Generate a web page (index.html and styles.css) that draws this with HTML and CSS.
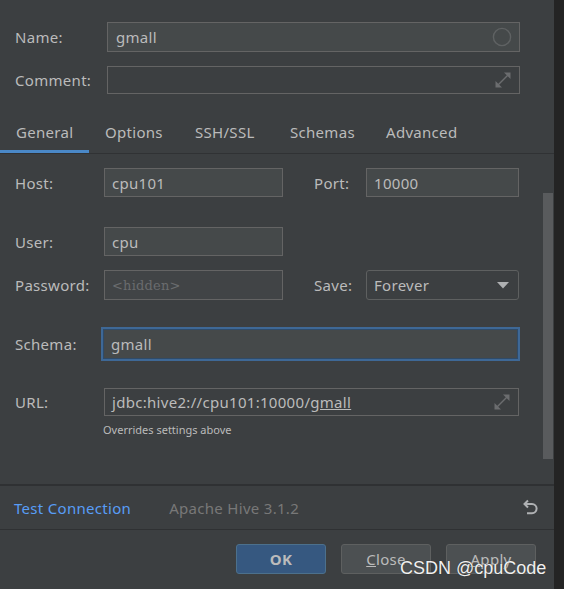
FILE: index.html
```html
<!DOCTYPE html>
<html>
<head>
<meta charset="utf-8">
<link rel="stylesheet" href="styles.css">
</head>
<body>
<div class="window">
  <div class="dialog">
    <div class="head">
      <div class="row row-name">
        <span class="label">Name:</span>
        <div class="field filled head-field">
          <span class="value">gmall</span>
          <svg class="icon-circle" width="20" height="20" viewBox="0 0 20 20"><circle cx="10" cy="10" r="8.6" fill="none" stroke="#5f6263" stroke-width="1.4"/></svg>
        </div>
      </div>
      <div class="row row-comment">
        <span class="label">Comment:</span>
        <div class="field plain head-field">
          <span class="value"></span>
          <svg class="icon-expand" width="18" height="18" viewBox="0 0 18 18"><path d="M3.5 14.5 L14.5 3.5" stroke="#6b6d6f" stroke-width="1.5"/><path d="M10 1.5 H16.5 V8 Z" fill="#6b6d6f"/><path d="M1.5 10 V16.5 H8 Z" fill="#6b6d6f"/></svg>
        </div>
      </div>
    </div>

    <nav class="tabs">
      <span class="tab t1 active">General</span>
      <span class="tab t2">Options</span>
      <span class="tab t3">SSH/SSL</span>
      <span class="tab t4">Schemas</span>
      <span class="tab t5">Advanced</span>
    </nav>

    <div class="body">
      <div class="form">
        <div class="frow r-host">
          <span class="label">Host:</span>
          <div class="field filled short"><span class="value">cpu101</span></div>
          <span class="label side">Port:</span>
          <div class="field filled side-field"><span class="value">10000</span></div>
        </div>
        <div class="frow r-user">
          <span class="label">User:</span>
          <div class="field filled short"><span class="value">cpu</span></div>
        </div>
        <div class="frow r-pass">
          <span class="label">Password:</span>
          <div class="field pass short"><span class="placeholder">&lt;hidden&gt;</span></div>
          <span class="label side">Save:</span>
          <div class="combo side-field"><span class="value">Forever</span>
            <svg class="arrow" width="12" height="7" viewBox="0 0 12 7"><path d="M0 0 H12 L6 6.5 Z" fill="#aeb0b2"/></svg>
          </div>
        </div>
        <div class="frow r-schema">
          <span class="label">Schema:</span>
          <div class="field focused"><span class="value">gmall</span></div>
        </div>
        <div class="frow r-url">
          <span class="label">URL:</span>
          <div class="field plain long">
            <span class="value">jdbc:hive2://cpu101:10000/<u>gmall</u></span>
            <svg class="icon-expand" width="18" height="18" viewBox="0 0 18 18"><path d="M3.5 14.5 L14.5 3.5" stroke="#6b6d6f" stroke-width="1.5"/><path d="M10 1.5 H16.5 V8 Z" fill="#6b6d6f"/><path d="M1.5 10 V16.5 H8 Z" fill="#6b6d6f"/></svg>
          </div>
        </div>
        <div class="hint">Overrides settings above</div>
      </div>
      <div class="scrollbar"><div class="thumb"></div></div>
    </div>

    <div class="status">
      <span class="link">Test Connection</span>
      <span class="driver">Apache Hive 3.1.2</span>
      <svg class="undo" width="18" height="18" viewBox="0 0 18 18"><path d="M3.5 5 H11 A4.6 4.6 0 0 1 11 14.2 H6" fill="none" stroke="#afb1b3" stroke-width="2"/><path d="M7 1.5 L3.5 5 L7 8.5" fill="none" stroke="#afb1b3" stroke-width="2"/></svg>
    </div>

    <div class="buttons">
      <button class="btn primary">OK</button>
      <button class="btn"><u>C</u>lose</button>
      <button class="btn"><u>A</u>pply</button>
    </div>
  </div>
  <div class="edge"></div>
</div>
<div class="watermark">CSDN @cpuCode</div>
</body>
</html>
```

FILE: styles.css
```css
html, body {
  margin: 0;
  padding: 0;
}
body {
  width: 564px;
  height: 589px;
  overflow: hidden;
  background: #3c3f41;
  font-family: "Noto Sans", "Open Sans", sans-serif;
  font-size: 15px;
  letter-spacing: 0.3px;
  color: #bbbbbb;
  position: relative;
}
.window {
  display: flex;
  height: 589px;
}
.dialog {
  width: 554px;
  display: flex;
  flex-direction: column;
}
.edge {
  width: 10px;
  background: #242424;
}

/* header */
.head {
  padding: 22px 0 0 15px;
  display: flex;
  flex-direction: column;
  gap: 14px;
}
.row {
  display: flex;
  align-items: center;
}
.row .label {
  width: 92px;
}
.row-name .field { height: 30px; }
.row-comment .field { height: 28px; }
.head-field {
  width: 413px;
}
.label {
  line-height: 20px;
  white-space: nowrap;
}

.field {
  box-sizing: border-box;
  border: 1px solid #646464;
  display: flex;
  align-items: center;
  padding: 0 7px;
  position: relative;
}
.field.filled { background: #45494a; }
.field.plain { background: #3c3f41; }
.field.pass { background: #414446; }
.value { flex: 1; white-space: nowrap; line-height: 20px; }
.row-name .value { padding-left: 1px; }

/* tabs */
.tabs {
  margin-top: 18px;
  display: flex;
  height: 41px;
  border-bottom: 1px solid #303234;
}
.tab {
  box-sizing: border-box;
  display: flex;
  align-items: center;
  padding: 0 0 1px 16px;
  white-space: nowrap;
}
.t1 { width: 89px; }
.t2 { width: 90px; }
.t3 { width: 95px; }
.t4 { width: 96px; }
.tab.active {
  box-shadow: inset 0 -3px 0 #4a88c7;
}

/* body */
.body {
  height: 330px;
  display: flex;
}
.form {
  flex: 1;
  padding-left: 15px;
  display: flex;
  flex-direction: column;
}
.frow {
  display: flex;
  align-items: center;
}
.frow > .label:first-child { width: 89px; }
.frow .short { width: 179px; }
.frow .label.side { margin-left: 31px; width: 52px; }
.frow .side-field { width: 153px; }
.frow .field { padding-left: 7px; }

.r-host { margin-top: 14px; height: 29px; }
.r-host .field { height: 29px; }
.r-user { margin-top: 30px; height: 29px; }
.r-user .field { height: 29px; }
.r-pass { margin-top: 14px; height: 30px; }
.r-pass .field { height: 30px; }
.r-schema { margin-top: 27px; height: 34px; }
.r-url { margin-top: 27px; height: 28px; }
.r-url .field { height: 28px; }
.long { width: 415px; }

.placeholder {
  font-family: "DejaVu Serif", "Liberation Serif", serif;
  font-size: 13px;
  color: #6a6c6e;
  letter-spacing: 0.2px;
}
.combo {
  box-sizing: border-box;
  height: 30px;
  border: 1px solid #5e6060;
  border-radius: 3px;
  background: #3c3f41;
  display: flex;
  align-items: center;
  padding: 0 9px 0 7px;
}
.combo .arrow { margin-top: 1px; }

.field.focused {
  margin-left: -3px;
  width: 419px;
  height: 34px;
  border: 2px solid #3e6896;
  box-shadow: inset 0 0 0 1px #2f4b69;
  background: #45494a;
  padding-left: 8px;
}

.hint {
  margin: 7px 0 0 88px;
  font-size: 11px;
  line-height: 13px;
  letter-spacing: 0;
}

.scrollbar {
  width: 10px;
  margin-right: 1px;
}
.thumb {
  margin-top: 39px;
  height: 266px;
  background: #595b5d;
}

/* status */
.status {
  border-top: 2px solid #2f3133;
  border-bottom: 1px solid #2f3133;
  height: 43px;
  display: flex;
  align-items: center;
  padding: 0 15px 0 14px;
}
.link { color: #589df6; }
.driver { color: #787878; margin-left: 38px; flex: 1; }
.undo { margin-top: 1px; }

/* buttons */
.buttons {
  display: flex;
  justify-content: flex-end;
  gap: 15px;
  padding: 14px 18px 0 0;
}
.btn {
  box-sizing: border-box;
  width: 90px;
  height: 30px;
  border-radius: 3px;
  border: 1px solid #5e6060;
  background: #4c5052;
  color: #bbbbbb;
  font-family: "Noto Sans", "Open Sans", sans-serif;
  font-size: 15px;
  letter-spacing: 0.3px;
  padding: 0;
}
.btn.primary {
  background: #365880;
  border-color: #4c708c;
  font-weight: bold;
}

.watermark {
  position: absolute;
  left: 400px;
  top: 557px;
  font-family: "Liberation Sans", Arial, sans-serif;
  font-size: 18px;
  line-height: 22px;
  letter-spacing: 0;
  color: #f0f0f0;
  text-shadow: 0 0 1px #2a2a2a;
}
```
